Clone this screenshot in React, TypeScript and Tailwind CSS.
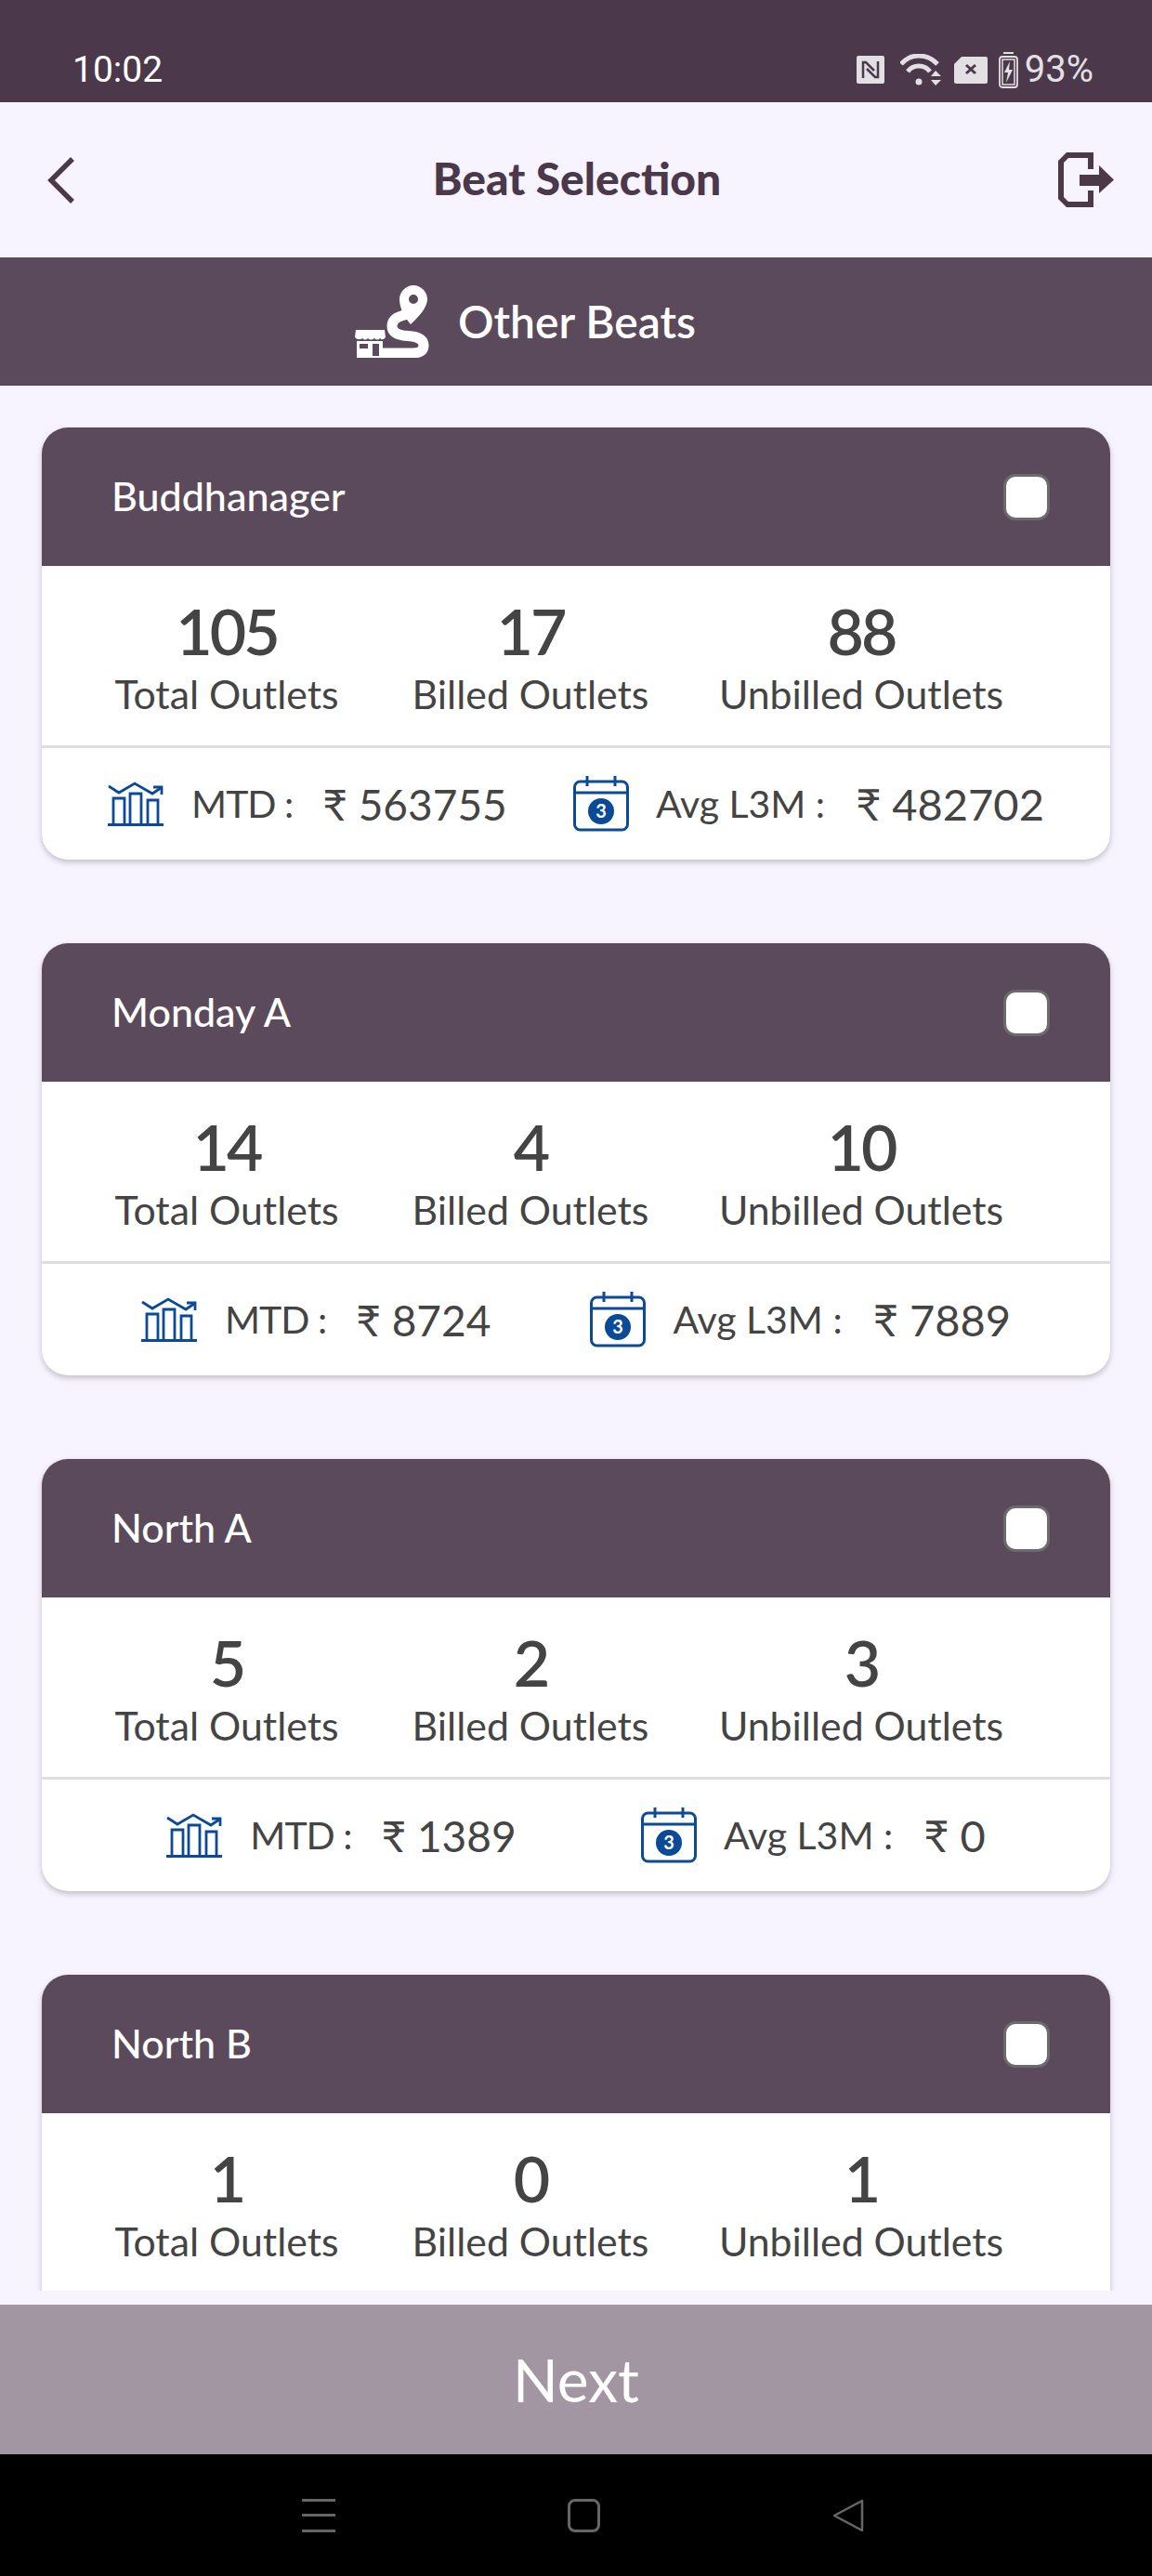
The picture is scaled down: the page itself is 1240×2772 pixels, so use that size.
import React from 'react';

interface Beat {
  name: string;
  total: number;
  billed: number;
  unbilled: number;
  mtd?: number;
  avg?: number;
}

const beats: Beat[] = [
  { name: 'Buddhanager', total: 105, billed: 17, unbilled: 88, mtd: 563755, avg: 482702 },
  { name: 'Monday A', total: 14, billed: 4, unbilled: 10, mtd: 8724, avg: 7889 },
  { name: 'North A', total: 5, billed: 2, unbilled: 3, mtd: 1389, avg: 0 },
  { name: 'North B', total: 1, billed: 0, unbilled: 1 },
];

const StatusIcons = () => (
  <div className="flex items-center text-[#e3e0e3]">
    {/* nfc */}
    <svg width="30" height="30" viewBox="0 0 30 30" className="mr-[17px]">
      <rect width="30" height="30" rx="2" fill="#e3e0e3" />
      <path d="M7 24V7h3l9 9M23 6v17h-3l-9-9" fill="none" stroke="#4b384b" strokeWidth="2.5" />
    </svg>
    {/* wifi */}
    <svg width="44" height="34" viewBox="0 0 44 34" className="mr-[14px]">
      <path d="M1 11C11 -1 29 -1 40 11" fill="none" stroke="#e3e0e3" strokeWidth="5" />
      <path d="M8 19C14 11 26 11 32 19" fill="none" stroke="#e3e0e3" strokeWidth="5" />
      <circle cx="20" cy="30" r="3.5" fill="#e3e0e3" />
      <path d="M33 24L38 18L44 24ZM33 28L38 34L44 28Z" fill="#e3e0e3" />
    </svg>
    {/* sim */}
    <svg width="36" height="29" viewBox="0 0 36 29" className="mr-[12px]">
      <path d="M8 0H34Q36 0 36 2V27Q36 29 34 29H2Q0 29 0 27V8Z" fill="#e3e0e3" />
      <path d="M13 9L23 18M23 9L13 18" stroke="#4b384b" strokeWidth="3" />
    </svg>
    {/* battery */}
    <svg width="21" height="39" viewBox="0 0 21 39" className="mr-[7px]">
      <rect x="5" y="0" width="11" height="2" fill="#e3e0e3" />
      <rect x="1" y="5" width="19" height="33" rx="3" fill="none" stroke="#e3e0e3" strokeWidth="1.8" />
      <path d="M4 8H17V35H4Z" fill="none" stroke="#e3e0e3" strokeWidth="1.5" />
      <path d="M12 10L6 22H10L8 33L15 19H11Z" fill="#e3e0e3" />
    </svg>
    <span className="font-['Roboto',sans-serif] text-[40px] leading-[40px]">93%</span>
  </div>
);

const LogoutIcon = () => (
  <svg width="60" height="59" viewBox="0 0 60 59">
    <path
      d="M38 18V0H9L0 9V50L9 59H38V41H32V53H11L6 48V11L11 6H32V18Z"
      fill="#4b384b"
    />
    <path d="M23 24H44V14L60 29.5L44 44V36H23Z" fill="#4b384b" />
  </svg>
);

const RouteIcon = () => (
  <svg width="80" height="78" viewBox="0 0 80 78">
    <path
      fillRule="evenodd"
      d="M63 0C71 0 78 7 78 15C78 23 70 33 60 42C52 33 48 23 48 15C48 7 55 0 63 0ZM63 10A5 5 0 1 0 63 20A5 5 0 1 0 63 10Z"
      fill="#fff"
    />
    <path
      d="M56 31L50 33Q40 36 40 44Q40 52 52 54L62 55Q74 57 74 65Q74 73 62 73L28 73"
      fill="none"
      stroke="#fff"
      strokeWidth="11"
    />
    <path d="M1 48H32L33 56Q30 60 27 57Q24 60 21 57Q17 60 14 57Q11 60 8 57Q4 60 0 56Z" fill="#fff" />
    <path
      fillRule="evenodd"
      d="M2 60H30V78H2ZM5 63V68H14V63ZM19 63V76H26V63Z"
      fill="#fff"
    />
  </svg>
);

const ChartIcon = () => (
  <svg width="60" height="48" viewBox="0 0 60 48" className="shrink-0">
    <g fill="none" stroke="#0b4a96" strokeWidth="2.8">
      <path d="M1 5L12 12L29 2L48 13L57 7" />
      <path d="M49 6H58V14" />
      <path d="M6 46V18H18V46M24 46V13H36V46M43 46V20H54V46" />
      <path d="M0 46.5H60" strokeWidth="3" />
    </g>
  </svg>
);

const CalendarIcon = () => (
  <svg width="60" height="60" viewBox="0 0 60 60" className="shrink-0">
    <g fill="none" stroke="#0b4a96" strokeWidth="3">
      <rect x="1.5" y="6" width="57" height="52" rx="6" />
      <path d="M1.5 18H58.5M15 0V11M45 0V11" />
    </g>
    <circle cx="30" cy="38" r="14" fill="#0b4a96" />
    <text x="30" y="45" textAnchor="middle" fontSize="20" fontWeight="700" fill="#fff" fontFamily="Lato, sans-serif">
      3
    </text>
  </svg>
);

const Stat = ({ value, label }: { value: number; label: string }) => (
  <div className="flex flex-col items-center">
    <div className="text-[68px] leading-[72px] font-semibold tracking-[-3px]">{value}</div>
    <div className="text-[42.8px] leading-[46px] mt-[9px] whitespace-nowrap">{label}</div>
  </div>
);

const BeatCard = ({ beat }: { beat: Beat }) => (
  <div className="bg-white rounded-[28px] shadow-[0_3px_6px_rgba(0,0,0,0.22)] shrink-0 overflow-hidden text-[#444444]">
    <div className="h-[149px] bg-[#5b4a5b] flex items-center justify-between pl-[75px] pr-[65px]">
      <span className="text-white text-[43px] font-medium">{beat.name}</span>
      <div className="w-[50px] h-[50px] rounded-[13px] bg-white border-[3px] border-[#6b6b6b]" />
    </div>
    <div className="h-[193px] pt-[34px] pl-[59px] grid grid-cols-[280px_374px_338px] items-start">
      <Stat value={beat.total} label="Total Outlets" />
      <Stat value={beat.billed} label="Billed Outlets" />
      <Stat value={beat.unbilled} label="Unbilled Outlets" />
    </div>
    <div className="h-[123px] border-t-[3px] border-[#dfdde1] flex items-center justify-evenly whitespace-nowrap">
      {beat.mtd !== undefined && (
        <>
          <div className="flex items-center">
            <ChartIcon />
            <span className="ml-[30px] text-[41px] tracking-[-1px]">MTD :</span>
            <span className="ml-[32px] text-[46px]">₹ {beat.mtd}</span>
          </div>
          <div className="flex items-center">
            <CalendarIcon />
            <span className="ml-[29px] text-[41px]">Avg L3M :</span>
            <span className="ml-[33px] text-[47px]">₹ {beat.avg}</span>
          </div>
        </>
      )}
    </div>
  </div>
);

export default function App() {
  return (
    <div className="w-[1240px] h-[2772px] flex flex-col overflow-hidden bg-[#f7f4ff] font-['Lato','Noto_Sans',sans-serif]">
      {/* status bar */}
      <div className="h-[110px] bg-[#4b384b] flex items-end justify-between pl-[78px] pr-[63px] pb-[15px] shrink-0">
        <span className="font-['Roboto',sans-serif] text-[39px] leading-[40px] text-white">10:02</span>
        <StatusIcons />
      </div>

      {/* header */}
      <div className="h-[167px] flex items-center justify-between pl-[51px] pr-[41px] shrink-0">
        <div className="w-[52px]">
          <svg width="30" height="50" viewBox="0 0 30 50">
            <path d="M27 2L4 25L27 48" fill="none" stroke="#4b384b" strokeWidth="5.5" />
          </svg>
        </div>
        <span className="text-[48px] leading-[56px] pb-[3px] font-black text-[#4b384b]">Beat Selection</span>
        <LogoutIcon />
      </div>

      {/* banner */}
      <div className="h-[138px] bg-[#5b4a5b] flex items-center pl-[382px] shrink-0">
        <RouteIcon />
        <span className="ml-[31px] text-white text-[48px] font-semibold">Other Beats</span>
      </div>

      {/* list */}
      <div className="flex-1 min-h-0 overflow-hidden px-[45px] pt-[45px] flex flex-col gap-[90px]">
        {beats.map((b) => (
          <BeatCard key={b.name} beat={b} />
        ))}
      </div>

      {/* next */}
      <div className="h-[161px] mt-[15px] bg-[#a296a3] flex items-center justify-center text-white text-[64px] shrink-0">
        Next
      </div>

      {/* nav bar */}
      <div className="h-[131px] bg-black flex items-center pl-[325px] gap-[250px] shrink-0">
        <div className="w-[36px] h-[36px] flex flex-col justify-between">
          <div className="h-[3px] bg-[#666666]" />
          <div className="h-[3px] bg-[#666666]" />
          <div className="h-[3px] bg-[#666666]" />
        </div>
        <div className="w-[35px] h-[36px] rounded-[8px] border-[3px] border-[#666666]" />
        <svg width="34" height="36" viewBox="0 0 34 36">
          <path d="M32 2V34L2 18Z" fill="none" stroke="#666666" strokeWidth="2.5" strokeLinejoin="round" />
        </svg>
      </div>
    </div>
  );
}
